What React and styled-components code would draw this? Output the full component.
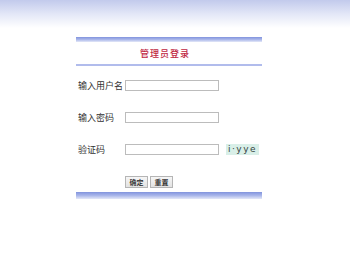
import React from "react";
import styled, { createGlobalStyle } from "styled-components";

const GlobalStyle = createGlobalStyle`
  html, body {
    margin: 0;
    padding: 0;
  }
  body {
    width: 350px;
    height: 280px;
    font-family: "Noto Sans CJK SC", "DejaVu Sans", sans-serif;
    background: linear-gradient(to bottom, #c2caec 0px, #e3e7f7 14px, #ffffff 28px) no-repeat;
  }
`;

const Panel = styled.div`
  width: 186px;
  margin: 37px 0 0 76px;
`;

const Bar = styled.div`
  height: ${(p) => p.$h}px;
  background: linear-gradient(to bottom, #8193dd 0%, #a9b6ea 50%, #e4e8f8 100%);
`;

const Title = styled.div`
  height: 22px;
  display: flex;
  align-items: center;
  justify-content: center;
  padding-right: 8px;
  font-size: 9px;
  font-weight: 500;
  letter-spacing: 1px;
  color: #c0263f;
`;

const Rule = styled.div`
  height: 2px;
  background: #b1bcec;
`;

const Form = styled.div`
  padding-top: 3px;
`;

const Row = styled.div`
  height: 32px;
  display: flex;
  align-items: center;
`;

const Label = styled.div`
  width: 47px;
  padding-left: 2px;
  font-size: 9px;
  color: #333;
`;

const Input = styled.input`
  box-sizing: border-box;
  width: 94px;
  height: 11px;
  margin: 0;
  padding: 0;
  border: 1px solid #bcbcbc;
  background: #fff;
`;

const Captcha = styled.span`
  margin-left: 7px;
  width: 33px;
  height: 11px;
  display: flex;
  align-items: center;
  justify-content: center;
  background: #d9efe8;
  color: #34443f;
  font-family: "DejaVu Sans", sans-serif;
  font-size: 9px;
  letter-spacing: 1.5px;
  line-height: 1;
`;

const Buttons = styled.div`
  height: 27px;
  display: flex;
  gap: 2px;
  padding-left: 49px;
  padding-top: 11px;
  box-sizing: border-box;
`;

const Button = styled.button`
  box-sizing: border-box;
  width: 23px;
  height: 12px;
  margin: 0;
  padding: 0;
  border: 1px solid #b5b5b5;
  background: linear-gradient(to bottom, #f6f6f6, #e2e2e2);
  font-family: "Noto Sans CJK SC", sans-serif;
  font-size: 7px;
  font-weight: 500;
  color: #222;
  line-height: 1;
`;

export default function App() {
  return (
    <>
      <GlobalStyle />
      <Panel>
        <Bar $h={5} />
        <Title>管理员登录</Title>
        <Rule />
        <Form>
          <Row>
            <Label>输入用户名</Label>
            <Input type="text" />
          </Row>
          <Row>
            <Label>输入密码</Label>
            <Input type="password" />
          </Row>
          <Row>
            <Label>验证码</Label>
            <Input type="text" />
            <Captcha>i·yye</Captcha>
          </Row>
          <Buttons>
            <Button>确定</Button>
            <Button>重置</Button>
          </Buttons>
        </Form>
        <Bar $h={7} />
      </Panel>
    </>
  );
}
